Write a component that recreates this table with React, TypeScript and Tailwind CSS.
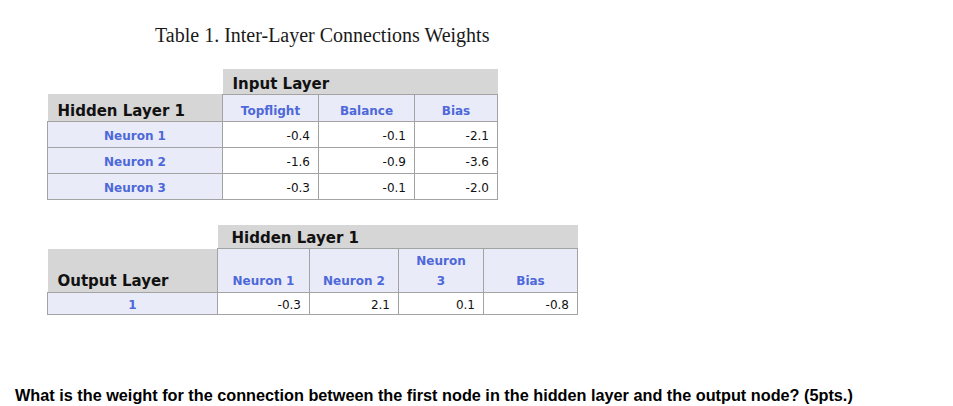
const font = { fontFamily: '"DejaVu Sans", Verdana, sans-serif' };

const inputCols = ["Topflight", "Balance", "Bias"];
const hiddenRows = [
  { name: "Neuron 1", values: ["-0.4", "-0.1", "-2.1"] },
  { name: "Neuron 2", values: ["-1.6", "-0.9", "-3.6"] },
  { name: "Neuron 3", values: ["-0.3", "-0.1", "-2.0"] },
];

const cell = "border border-[#a3a3a3]";

export default function App() {
  return (
    <div className="w-[953px] h-[406px] bg-white relative overflow-hidden">
      <h1
        className="pl-[155px] pt-[23px] text-[20px] leading-[25px] text-[#1a1a1a]"
        style={{ fontFamily: '"Liberation Serif", serif' }}
      >
        Table 1. Inter-Layer Connections Weights
      </h1>

      {/* input -> hidden */}
      <table className="ml-[47px] mt-[21px] border-collapse table-fixed" style={font}>
        <colgroup>
          <col className="w-[175px]" />
          <col className="w-[96px]" />
          <col className="w-[96px]" />
          <col className="w-[83px]" />
        </colgroup>
        <tbody>
          <tr className="h-[25px]">
            <td />
            <td colSpan={3} className="bg-[#d6d6d6] pl-[10px] align-bottom text-[15px] font-bold text-[#111] leading-[20px]">
              Input Layer
            </td>
          </tr>
          <tr className="h-[27px]">
            <td className="bg-[#d6d6d6] pl-[10px] pt-[7px] text-[15px] leading-[18px] font-bold text-[#111] align-middle border-b border-[#a3a3a3]">
              Hidden Layer 1
            </td>
            {inputCols.map((c) => (
              <td key={c} className={`${cell} bg-[#eaebf9] pt-[7px] text-center text-[12px] leading-[16px] font-bold text-[#4d68d8]`}>
                {c}
              </td>
            ))}
          </tr>
          {hiddenRows.map((r) => (
            <tr key={r.name} className="h-[26px]">
              <td className={`${cell} bg-[#eaebf9] pt-[4px] text-center text-[12px] leading-[16px] font-bold text-[#4d68d8]`}>{r.name}</td>
              {r.values.map((v, i) => (
                <td key={i} className={`${cell} pt-[4px] text-right pr-[8px] text-[12px] leading-[16px] text-[#111]`}>
                  {v}
                </td>
              ))}
            </tr>
          ))}
        </tbody>
      </table>

      {/* hidden -> output */}
      <table className="ml-[47px] mt-[25px] border-collapse table-fixed" style={font}>
        <colgroup>
          <col className="w-[170px]" />
          <col className="w-[92px]" />
          <col className="w-[89px]" />
          <col className="w-[85px]" />
          <col className="w-[94px]" />
        </colgroup>
        <tbody>
          <tr className="h-[24px]">
            <td />
            <td colSpan={4} className="bg-[#d6d6d6] pl-[14px] align-bottom text-[15px] font-bold text-[#111] leading-[20px]">
              Hidden Layer 1
            </td>
          </tr>
          <tr className="h-[44px]">
            <td className="bg-[#d6d6d6] pl-[10px] align-bottom pb-[1px] text-[15px] leading-[20px] font-bold text-[#111] border-b border-[#a3a3a3]">
              Output Layer
            </td>
            {["Neuron 1", "Neuron 2", "Neuron\n3", "Bias"].map((c) => (
              <td
                key={c}
                className={`${cell} bg-[#eaebf9] text-center align-bottom pb-[1px] whitespace-pre-line text-[12px] leading-[20px] font-bold text-[#4d68d8]`}
              >
                {c}
              </td>
            ))}
          </tr>
          <tr className="h-[22px]">
            <td className={`${cell} bg-[#eaebf9] pt-[3px] text-center text-[12px] leading-[16px] font-bold text-[#4d68d8]`}>1</td>
            {["-0.3", "2.1", "0.1", "-0.8"].map((v, i) => (
              <td key={i} className={`${cell} pt-[3px] text-right pr-[8px] text-[12px] leading-[16px] text-[#111]`}>
                {v}
              </td>
            ))}
          </tr>
        </tbody>
      </table>

      <p
        className="pl-[15px] pt-[70px] text-[16.25px] font-bold text-black leading-[20px] whitespace-nowrap"
        style={{ fontFamily: '"Liberation Sans", Arial, sans-serif' }}
      >
        What is the weight for the connection between the first node in the hidden layer and the output node? (5pts.)
      </p>
    </div>
  );
}
